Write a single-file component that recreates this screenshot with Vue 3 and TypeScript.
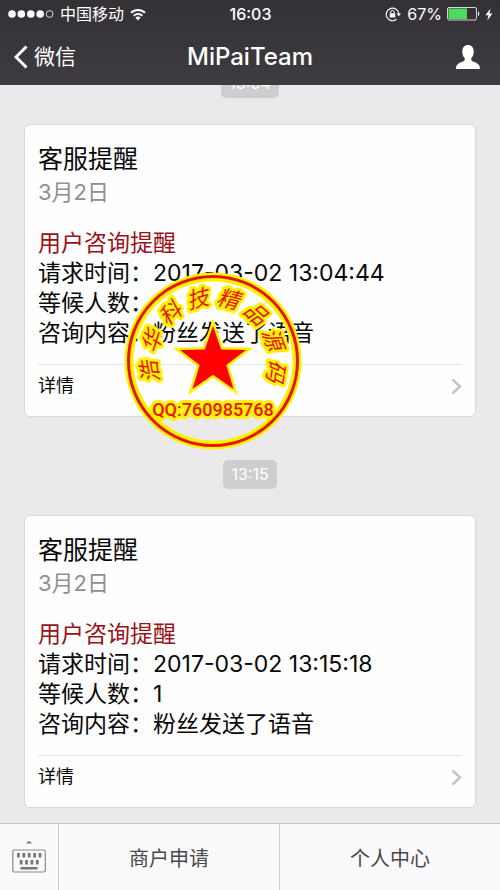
<script setup lang="ts">
interface Notice {
  time: string
  requestedAt: string
  waiting: string
  stamped: boolean
}

interface SealGlyph {
  char: string
  angle: number
}

const notices: Notice[] = [
  { time: '13:04', requestedAt: '2017-03-02 13:04:44', waiting: '', stamped: true },
  { time: '13:15', requestedAt: '2017-03-02 13:15:18', waiting: '1', stamped: false },
]

const sealGlyphs: SealGlyph[] = [
  { char: '浩', angle: -100 },
  { char: '华', angle: -72 },
  { char: '科', angle: -42 },
  { char: '技', angle: -14 },
  { char: '精', angle: 14 },
  { char: '品', angle: 42 },
  { char: '源', angle: 70 },
  { char: '码', angle: 99 },
]

const menus: string[] = ['商户申请', '个人中心']

const keyColumns: number[] = [0, 1, 2, 3, 4]
</script>

<template>
  <div class="page">
    <header class="top">
      <div class="status">
        <div class="status-left">
          <svg width="46" height="10" viewBox="0 0 46 10" aria-hidden="true">
            <circle cx="4" cy="5" r="3.800" fill="#fff" />
            <circle cx="13.300" cy="5" r="3.800" fill="#fff" />
            <circle cx="22.800" cy="5" r="3.800" fill="#fff" />
            <circle cx="32.200" cy="5" r="3.800" fill="#fff" />
            <circle cx="41.600" cy="5" r="3.400" fill="none" stroke="#fff" stroke-width=".8" />
          </svg>
          <span>中国移动</span>
          <svg width="16" height="13" viewBox="0 0 16 13" aria-hidden="true">
            <g fill="none" stroke="#fff" stroke-width="2">
              <path d="M1 4.800a10 10 0 0 1 14 0" />
              <path d="M3.700 7.700a6.200 6.200 0 0 1 8.600 0" />
            </g>
            <path d="M8 12.500 5.400 9.800a3.700 3.700 0 0 1 5.200 0z" fill="#fff" />
          </svg>
        </div>
        <span class="clock">16:03</span>
        <div class="status-right">
          <svg width="17" height="15" viewBox="0 0 17 15" aria-hidden="true">
            <path d="M11.500 12.300A6.300 6.300 0 1 1 13.800 7" fill="none" stroke="#fff" stroke-width="1.100" />
            <path d="M11.600 6.600h4.400l-2.200 2.700z" fill="#fff" />
            <rect x="4.700" y="6.300" width="5.600" height="4.200" rx=".5" fill="#fff" />
            <path d="M5.800 6.500V5.100a1.700 1.700 0 0 1 3.400 0v1.400" fill="none" stroke="#fff" stroke-width="1" />
          </svg>
          <span class="percent">67%</span>
          <svg width="33" height="14" viewBox="0 0 33 14" aria-hidden="true">
            <rect x=".5" y=".5" width="29" height="12.500" rx="1.500" fill="none" stroke="#d5d3d8" />
            <rect x="1.500" y="1.500" width="18.500" height="10.500" fill="#4cd964" />
            <path d="M31 4.500c1.600.4 1.600 4.100 0 4.500z" fill="#fff" />
          </svg>
          <svg width="8" height="13" viewBox="0 0 8 13" aria-hidden="true">
            <path d="M5.500.5.500 7.200h3L2.200 12.500 7.500 5.500H4.400z" fill="#fff" />
          </svg>
        </div>
      </div>
      <nav class="nav">
        <a class="back" href="#">
          <svg width="14" height="24" viewBox="0 0 14 24" aria-hidden="true">
            <path d="M12.500 1.500 2 12l10.500 10.500" fill="none" stroke="#fff" stroke-width="3" />
          </svg>
          <span>微信</span>
        </a>
        <h1>MiPaiTeam</h1>
        <button class="profile" type="button" aria-label="详情">
          <svg width="24" height="24" viewBox="0 0 24 24" aria-hidden="true">
            <path d="M12 0c3.600 0 5.700 2.600 5.700 6.400 0 3-1 5.400-2.600 7 .1 1.700.6 2.500 2.600 3.300 3.700 1.500 6.300 2.500 6.300 7.300H0c0-4.800 2.600-5.800 6.300-7.300 2-.8 2.500-1.600 2.600-3.300-1.600-1.600-2.600-4-2.600-7C6.300 2.600 8.400 0 12 0z" fill="#fff" />
          </svg>
        </button>
      </nav>
    </header>

    <main class="messages">
      <section v-for="notice in notices" :key="notice.time" class="message">
        <time class="stamp">{{ notice.time }}</time>
        <article class="card">
          <h2>客服提醒</h2>
          <p class="date">3月2日</p>
          <div class="details">
            <p class="alert">用户咨询提醒</p>
            <p>请求时间：{{ notice.requestedAt }}</p>
            <p>等候人数：{{ notice.waiting }}</p>
            <p>咨询内容：粉丝发送了语音</p>
          </div>
          <a class="more" href="#">
            <span>详情</span>
            <svg width="11" height="17" viewBox="0 0 11 17" aria-hidden="true">
              <path d="M1.500 1.500 9 8.500l-7.500 7" fill="none" stroke="#c4c3c7" stroke-width="2.500" />
            </svg>
          </a>
          <svg v-if="notice.stamped" class="seal" width="178" height="178" viewBox="-89 -89 178 178">
            <circle r="84" fill="none" stroke="#fff200" stroke-width="9" />
            <circle r="84.500" fill="none" stroke="#e8140c" stroke-width="3" />
            <path
              class="star"
              d="M0-35 8.200-11.500 33-11 13.300 4 20.500 28 0 13.800-20.500 28-13.300 4-33-11-8.200-11.500z"
            />
            <text
              v-for="glyph in sealGlyphs"
              :key="glyph.char"
              class="seal-glyph"
              y="-56"
              :transform="`rotate(${glyph.angle})`"
            >{{ glyph.char }}</text>
            <text class="seal-number" y="55">QQ:760985768</text>
          </svg>
        </article>
      </section>
    </main>

    <footer class="toolbar">
      <button class="keyboard" type="button" aria-label="键盘">
        <svg width="34" height="34" viewBox="0 0 34 34" aria-hidden="true">
          <path d="M14 3.500Q17-1 20 3.500z" fill="#77757a" />
          <rect x=".8" y="10" width="32.500" height="22" rx="1.500" fill="none" stroke="#8b898e" stroke-width="1.200" />
          <g fill="#77757a">
            <rect v-for="n in keyColumns" :key="n" :x="5 + n * 5.400" y="13" width="2.800" height="4.500" />
            <rect v-for="n in keyColumns.slice(0, 4)" :key="n" :x="7.700 + n * 5.400" y="20" width="2.800" height="4.500" />
            <rect x="8.500" y="27" width="17" height="2.500" />
          </g>
        </svg>
      </button>
      <button v-for="menu in menus" :key="menu" class="menu" type="button">{{ menu }}</button>
    </footer>
  </div>
</template>

<style>
body {
  margin: 0;
}
</style>

<style scoped>
.page {
  display: flex;
  flex-direction: column;
  min-height: 100vh;
  background: #ebe9ec;
  color: #080808;
  font-family: Inter, "Noto Sans CJK SC", sans-serif;
}

h1,
h2,
p {
  margin: 0;
  font-weight: 400;
}

a {
  color: inherit;
  text-decoration: none;
}

button {
  margin: 0;
  padding: 0;
  border: 0;
  background: none;
  font: inherit;
  color: inherit;
}

svg {
  display: block;
  flex: none;
}

.top {
  position: relative;
  z-index: 1;
  background: linear-gradient(#343136, #3e3c41);
  color: #fff;
}

.status,
.nav {
  display: grid;
  grid-template-columns: 1fr auto 1fr;
  align-items: center;
}

.status {
  height: 28px;
  padding: 0 7px 0 8px;
  font-size: 16px;
  line-height: 28px;
}

.status-left,
.status-right {
  display: flex;
  align-items: center;
  gap: 6px;
}

.status-right {
  justify-content: flex-end;
  gap: 5px;
}

.clock {
  font-weight: 500;
}

.nav {
  height: 57px;
  padding: 0 20px 0 14px;
}

.back {
  display: flex;
  align-items: center;
  gap: 6px;
  font-size: 21px;
  line-height: 32px;
}

h1 {
  padding-left: 6px;
  font-size: 24px;
  font-weight: 500;
  line-height: 32px;
}

.profile {
  justify-self: end;
}

.messages {
  flex: 1;
  padding: 0 24px 15px;
}

.message {
  display: flex;
  flex-direction: column;
  align-items: center;
  gap: 26px;
}

.message:first-child {
  margin-top: -16px;
}

.message + .message {
  margin-top: 43px;
}

.stamp {
  padding: 0 8px;
  border-radius: 5px;
  background: #cecdd0;
  color: #fff;
  font-size: 16px;
  line-height: 29px;
}

.card {
  position: relative;
  box-sizing: border-box;
  width: 100%;
  padding: 17px 13px 9px;
  border: 1px solid #d9d7db;
  border-radius: 6px;
  background: #fefefe;
}

h2 {
  font-size: 25px;
  line-height: 35px;
}

.date {
  color: #8f8e92;
  font-size: 22px;
  line-height: 30px;
}

.details {
  padding: 21px 0 16px;
  font-size: 23px;
  line-height: 30px;
}

.alert {
  color: #981318;
}

.more {
  display: flex;
  align-items: center;
  justify-content: space-between;
  border-top: 1px solid #e6e5e8;
  font-size: 18px;
  line-height: 42px;
}

.seal {
  position: absolute;
  top: 147px;
  left: 99px;
}

.star {
  fill: #f00;
  stroke: #fff200;
  stroke-width: 5px;
  paint-order: stroke;
}

.seal-glyph,
.seal-number {
  fill: #e8140c;
  stroke: #fff200;
  stroke-width: 6px;
  stroke-linejoin: round;
  paint-order: stroke;
  text-anchor: middle;
}

.seal-glyph {
  font-family: "Noto Sans CJK SC", sans-serif;
  font-size: 22px;
  font-style: italic;
  font-weight: 400;
}

.seal-number {
  font-family: Roboto, sans-serif;
  font-size: 18px;
  font-weight: 500;
}

.toolbar {
  display: flex;
  height: 66px;
  border-top: 1px solid #c5c4c7;
  background: #faf9fc;
  color: #49484b;
  font-size: 20px;
}

.keyboard {
  display: flex;
  align-items: center;
  justify-content: center;
  width: 58px;
}

.menu {
  flex: 1;
  border-left: 1px solid #cecdd0;
}
</style>
